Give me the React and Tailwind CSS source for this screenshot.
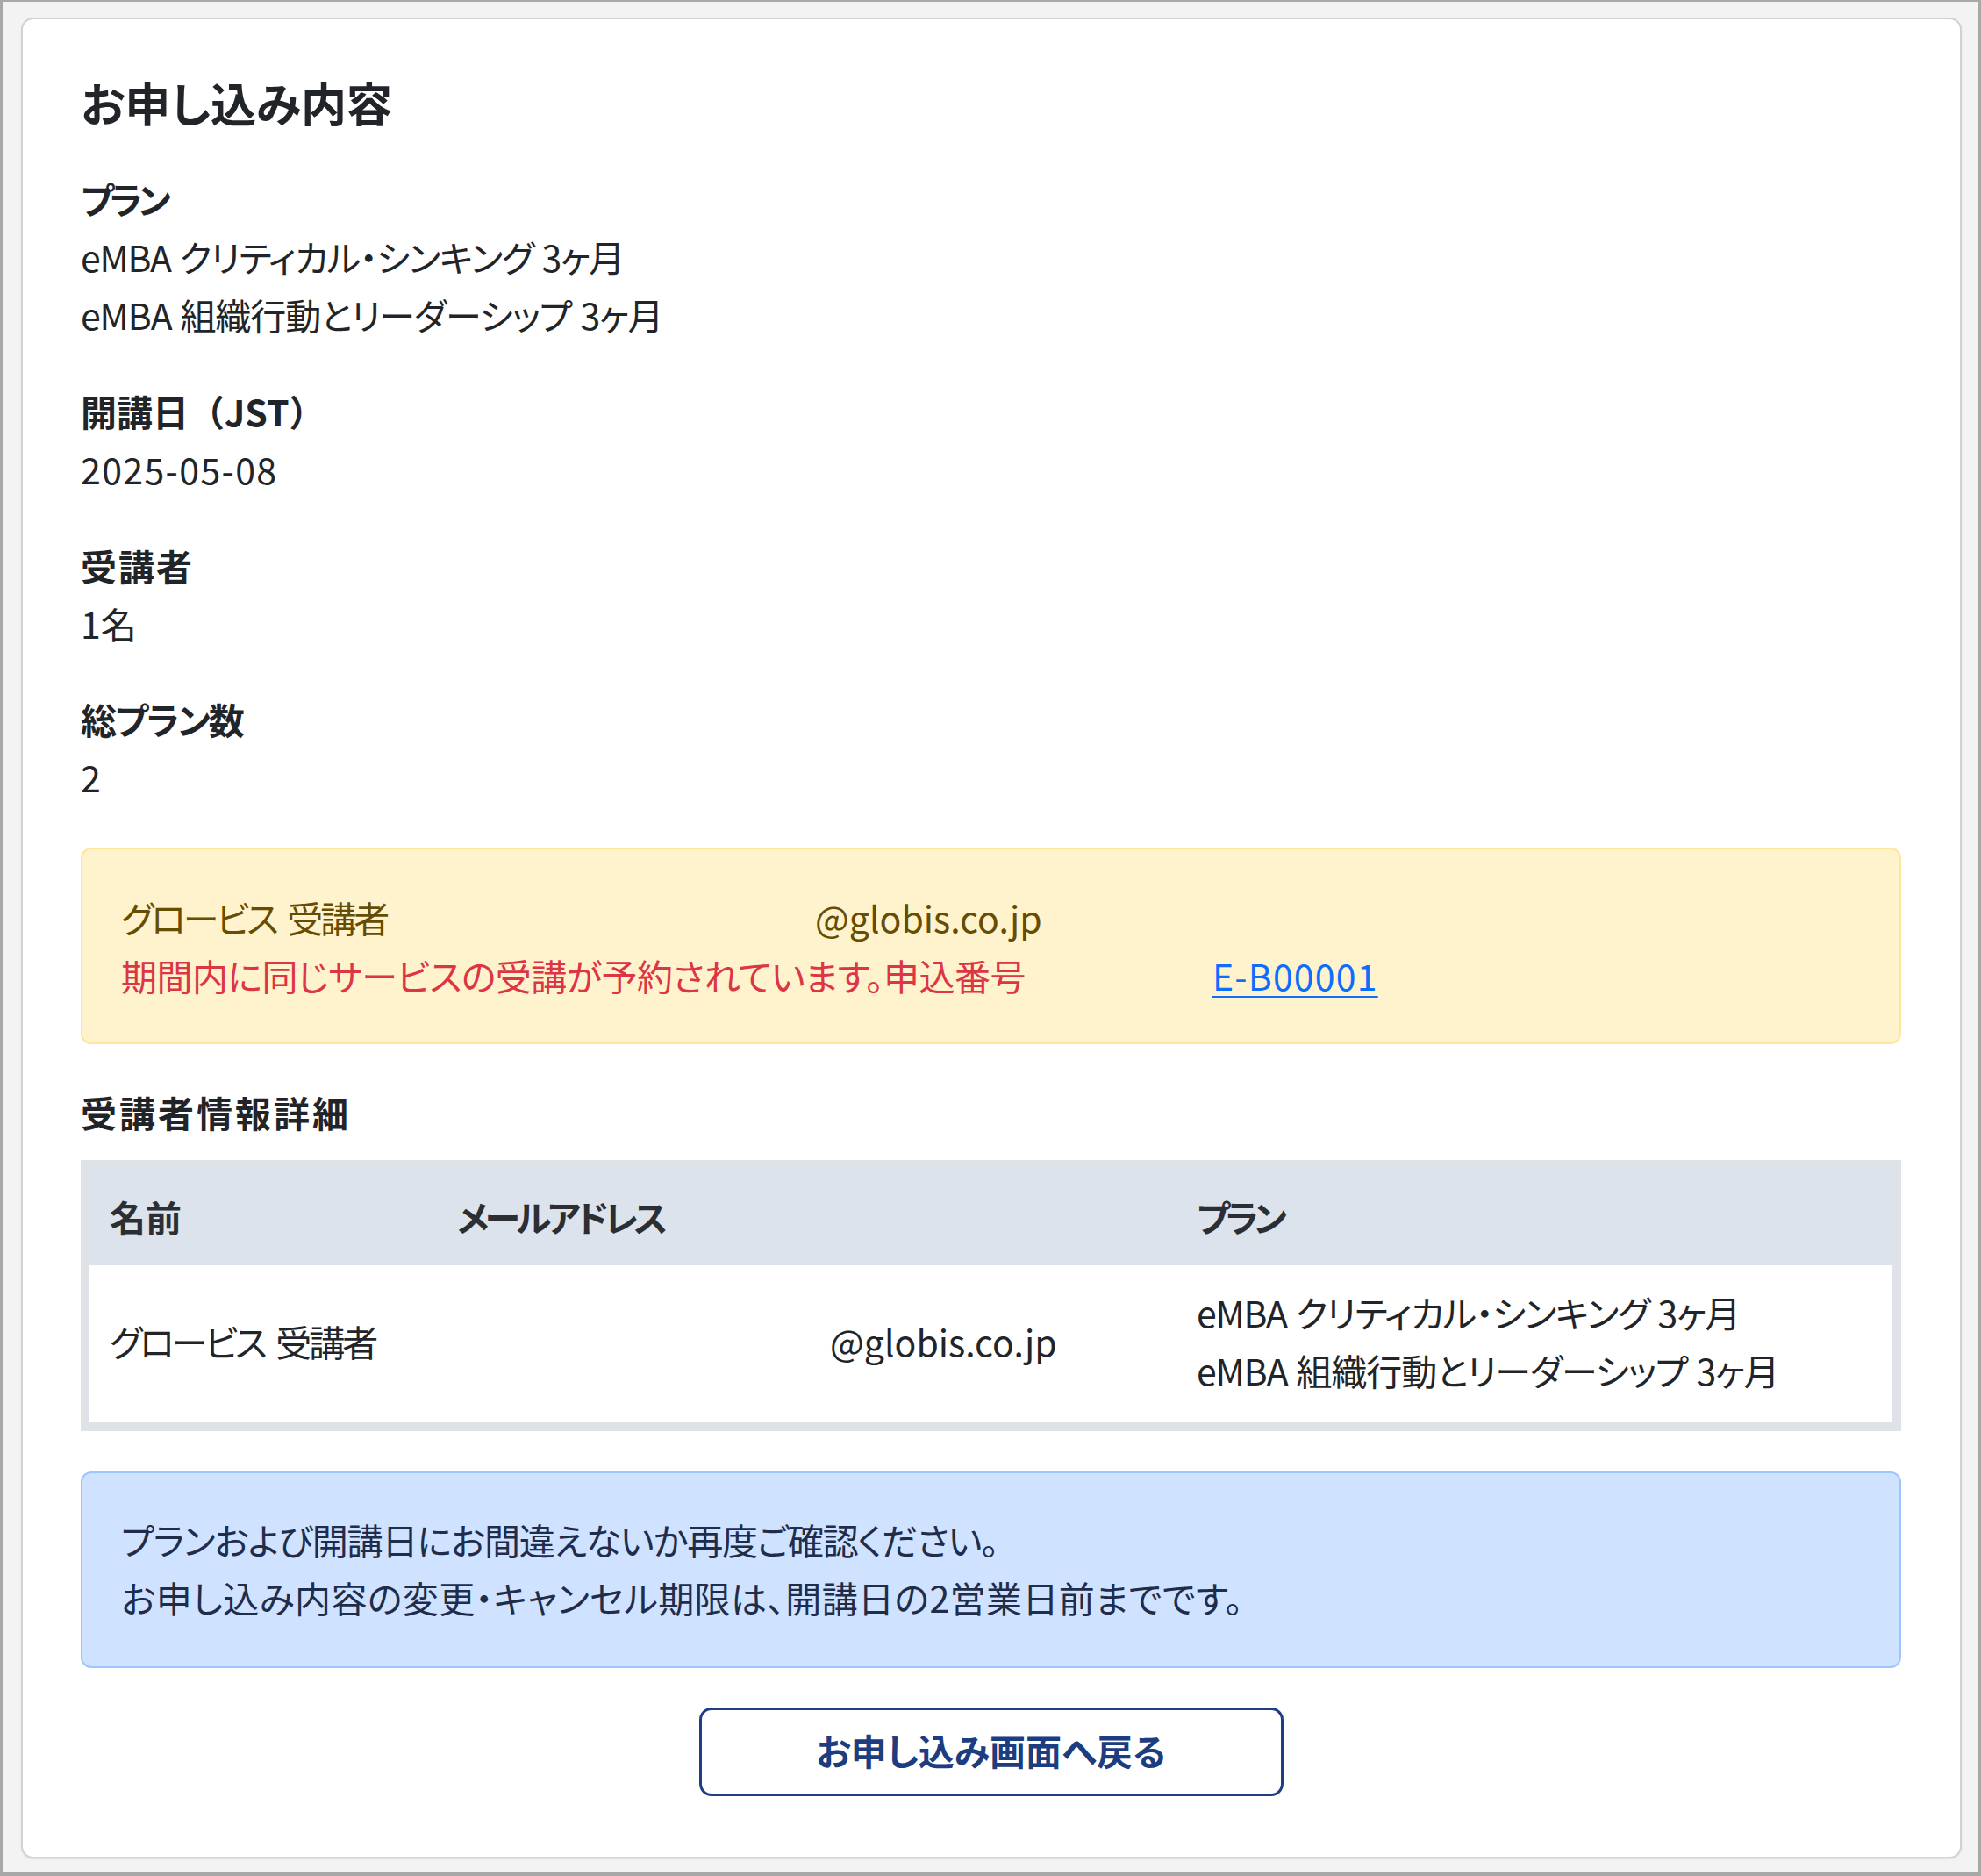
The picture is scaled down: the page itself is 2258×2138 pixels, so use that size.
export default function App() {
  const font = { fontFamily: '"Noto Sans CJK JP", "Noto Sans", sans-serif' };
  const full = "[font-feature-settings:normal]";
  return (
    <div
      className="w-[2258px] h-[2138px] bg-[#f3f3f3] border-l-[3px] border-t-[2px] border-r-[3px] border-b-[4px] border-[#a8a8a8] pt-[18px] pl-[21px] pr-[19px] pb-[17px] text-[#212529] [font-feature-settings:'palt']"
      style={font}
    >
      <div className="bg-white border-2 border-[#d2d2d2] rounded-[14px] pt-[64px] pb-[69px] pl-[66px] pr-[67px] shadow-[0_1px_2px_rgba(0,0,0,0.08)]">
        <h1 className="text-[52px] font-bold leading-[62px] mb-[45px] text-[#212529]">お申し込み内容</h1>

        <div className="text-[41px] leading-[66px]">
          <div className="mb-[44px]">
            <div className="font-bold tracking-[-5px]">プラン</div>
            <div className="tracking-[-1.3px] [word-spacing:2px]">eMBA クリティカル・シンキング 3ヶ月</div>
            <div className="tracking-[-1.1px] [word-spacing:2px]">eMBA 組織行動とリーダーシップ 3ヶ月</div>
          </div>
          <div className="mb-[44px]">
            <div className="font-bold">
              開講日<span className={full}>（</span>JST<span className={full}>）</span>
            </div>
            <div className="tracking-[1.4px]">2025-05-08</div>
          </div>
          <div className="mb-[43px]">
            <div className="font-bold tracking-[2px]">受講者</div>
            <div>1名</div>
          </div>
          <div className="mb-[48px]">
            <div className="font-bold tracking-[-2px]">総プラン数</div>
            <div>2</div>
          </div>

          <div className="bg-[#fff3cd] border-2 border-[#ffe69c] rounded-[12px] p-[44px] mb-[44px]">
            <div className="text-[#664d03]">
              <span className="inline-block min-w-[791px] tracking-[-3px] [word-spacing:6px]">グロービス 受講者</span>
              <span>@globis.co.jp</span>
            </div>
            <div>
              <span className="inline-block min-w-[1244px] text-[#dc3545] tracking-[-0.5px]">期間内に同じサービスの受講が予約されています。申込番号</span>
              <a className="text-[#0d6efd] underline underline-offset-[6px] decoration-2 tracking-[1.2px]">E-B00001</a>
            </div>
          </div>

          <div className="font-bold mb-[22px] tracking-[3px]">受講者情報詳細</div>

          <div className="border-[10px] border-[#dfe2e7]">
            <div className="grid grid-cols-[396px_843px_1fr] bg-[#dde3ec] font-bold text-[#2b2f33]">
              <div className="px-[23px] pt-[21px] pb-[23px]">名前</div>
              <div className="px-[23px] pt-[21px] pb-[23px] tracking-[-4.5px]">メールアドレス</div>
              <div className="px-[23px] pt-[21px] pb-[23px] tracking-[-5px]">プラン</div>
            </div>
            <div className="grid grid-cols-[396px_843px_1fr] bg-white items-center">
              <div className="px-[23px] pt-[20px] pb-[27px] tracking-[-3px] [word-spacing:6px]">グロービス 受講者</div>
              <div className="px-[23px] pt-[20px] pb-[27px]">
                <span className="inline-block w-[425px]"></span>
                <span>@globis.co.jp</span>
              </div>
              <div className="px-[23px] pt-[20px] pb-[27px]">
                <div className="tracking-[-1.3px] [word-spacing:2px]">eMBA クリティカル・シンキング 3ヶ月</div>
                <div className="tracking-[-1.1px] [word-spacing:2px]">eMBA 組織行動とリーダーシップ 3ヶ月</div>
              </div>
            </div>
          </div>

          <div className="mt-[46px] bg-[#cfe2ff] border-2 border-[#9ec5fe] rounded-[12px] pt-[42px] pb-[46px] px-[44px] text-[#1f2d4a]">
            <div className="tracking-[-1.1px]">プランおよび開講日にお間違えないか再度ご確認ください。</div>
            <div className="tracking-[0.4px]">お申し込み内容の変更・キャンセル期限は、開講日の2営業日前までです。</div>
          </div>

          <div className="mt-[45px] flex justify-center">
            <button className="w-[666px] h-[101px] pb-[6px] border-[3px] border-[#1f3f85] rounded-[14px] bg-white text-[#1c3d80] font-bold text-[41px] leading-[66px]">
              お申し込み画面へ戻る
            </button>
          </div>
        </div>
      </div>
    </div>
  );
}
